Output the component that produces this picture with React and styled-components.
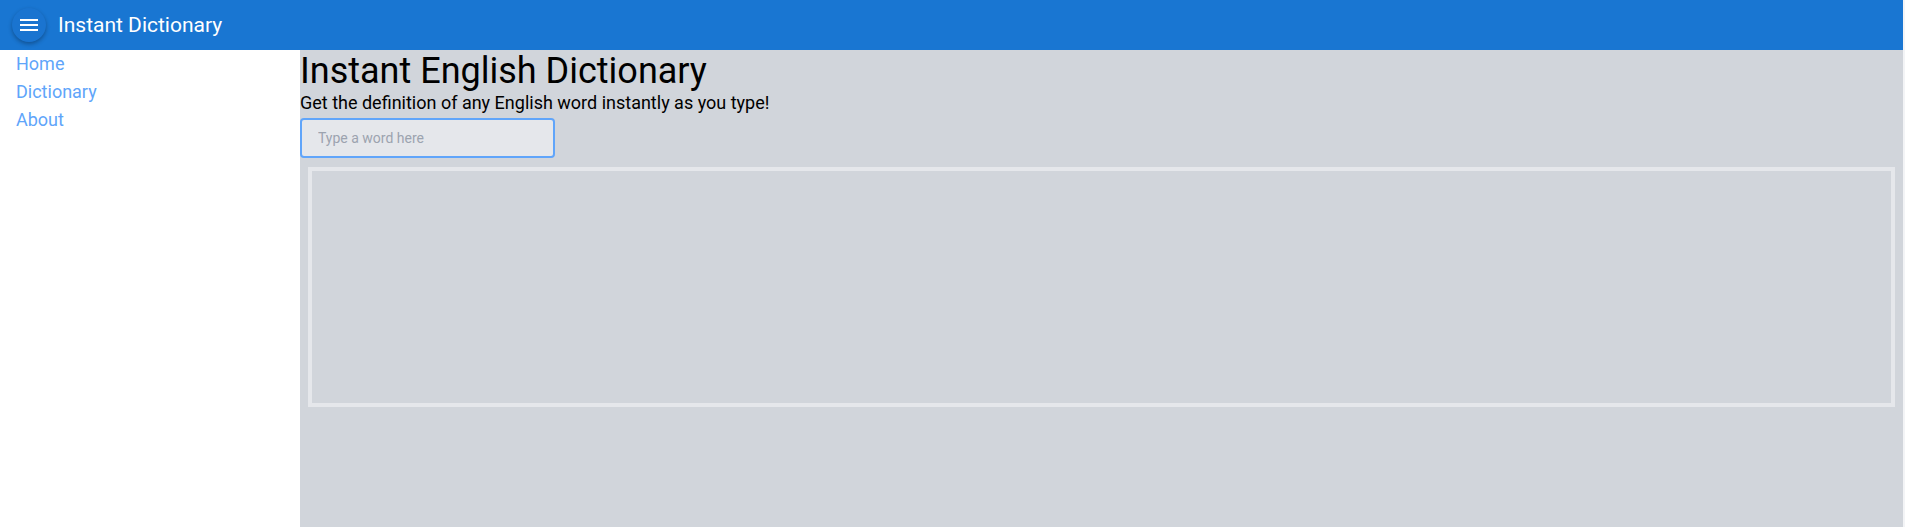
import React from 'react';
import styled, { createGlobalStyle } from 'styled-components';

const GlobalStyle = createGlobalStyle`
  * {
    box-sizing: border-box;
  }

  html, body {
    margin: 0;
    padding: 0;
  }

  body {
    font-family: Roboto, "Noto Sans", sans-serif;
    background-color: #f3f4f6;
    padding-right: 2px;
  }
`;

const Page = styled.div`
  display: flex;
  flex-direction: column;
  min-height: 100vh;
  background-color: #ffffff;
`;

const TopBar = styled.header`
  display: flex;
  align-items: center;
  height: 50px;
  padding-left: 12px;
  gap: 12px;
  background-color: #1976d2;
  color: #ffffff;
`;

const MenuButton = styled.button`
  display: flex;
  align-items: center;
  justify-content: center;
  width: 34px;
  height: 34px;
  padding: 0;
  border: none;
  border-radius: 50%;
  background-color: #1a74d0;
  box-shadow: 0 2px 4px rgba(0, 0, 0, 0.3);
  cursor: pointer;
`;

const Title = styled.h1`
  margin: 0;
  font-size: 21px;
  font-weight: 400;
`;

const Body = styled.div`
  flex: 1;
  display: grid;
  grid-template-columns: 300px 1fr;
`;

const Sidebar = styled.nav`
  display: flex;
  flex-direction: column;
  padding-left: 16px;
`;

const NavLink = styled.a`
  font-size: 18px;
  line-height: 28px;
  color: #60a5fa;
  text-decoration: none;
`;

const Main = styled.main`
  display: flex;
  flex-direction: column;
  align-items: flex-start;
  background-color: #d1d5db;
`;

const Heading = styled.h2`
  margin: 0;
  font-size: 36px;
  font-weight: 400;
  line-height: normal;
  color: #000000;
`;

const Subtitle = styled.p`
  margin: 0;
  font-size: 18px;
  line-height: normal;
  color: #000000;
`;

const SearchInput = styled.input`
  margin-top: 5px;
  width: 255px;
  height: 40px;
  padding: 0 16px;
  border: 2px solid #60a5fa;
  border-radius: 4px;
  background-color: #e5e7eb;
  font-family: Roboto, sans-serif;
  font-size: 14px;
  color: #111827;
  outline: none;

  &::placeholder {
    color: #9ca3af;
  }
`;

const Results = styled.section`
  align-self: stretch;
  margin: 9px 8px 0;
  height: 240px;
  border: 4px solid #e5e7eb;
`;

const MenuIcon = () => (
  <svg width="18" height="14" viewBox="0 0 18 14">
    <rect x="0" y="1" width="18" height="2" fill="#ffffff" />
    <rect x="0" y="6" width="18" height="2" fill="#ffffff" />
    <rect x="0" y="11" width="18" height="2" fill="#ffffff" />
  </svg>
);

const App = () => {
  return (
    <>
      <GlobalStyle />
      <Page>
        <TopBar>
          <MenuButton aria-label="menu">
            <MenuIcon />
          </MenuButton>
          <Title>Instant Dictionary</Title>
        </TopBar>
        <Body>
          <Sidebar>
            <NavLink href="#">Home</NavLink>
            <NavLink href="#">Dictionary</NavLink>
            <NavLink href="#">About</NavLink>
          </Sidebar>
          <Main>
            <Heading>Instant English Dictionary</Heading>
            <Subtitle>Get the definition of any English word instantly as you type!</Subtitle>
            <SearchInput type="text" placeholder="Type a word here" />
            <Results />
          </Main>
        </Body>
      </Page>
    </>
  );
};

export default App;
